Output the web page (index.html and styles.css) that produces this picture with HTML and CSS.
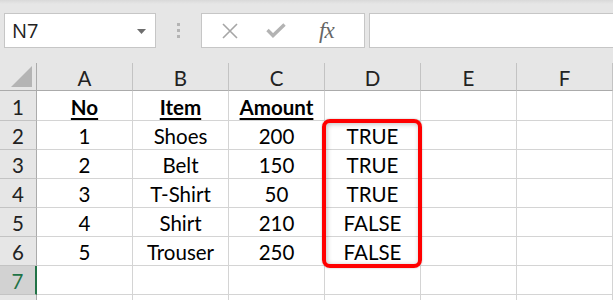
FILE: index.html
```html
<!DOCTYPE html>
<html>
<head>
<meta charset="utf-8">
<link rel="stylesheet" href="styles.css">
</head>
<body>
<div class="app">
  <div class="toolbar">
    <div class="namebox">
      <span class="name">N7</span>
      <svg class="caret" width="9" height="5" viewBox="0 0 9 5"><path d="M0 0h9L4.5 5z" fill="#6d6d6d"/></svg>
    </div>
    <div class="grip"><i></i><i></i><i></i></div>
    <div class="fbtns">
      <svg class="ico" width="18" height="16" viewBox="0 0 18 16"><path d="M2 1L16 15M16 1L2 15" stroke="#a6a6a6" stroke-width="1.6" fill="none"/></svg>
      <svg class="ico" width="20" height="15" viewBox="0 0 20 15"><path d="M1.5 7L7 12.5L18.5 1.5" stroke="#b3b3b3" stroke-width="3.4" fill="none"/></svg>
      <span class="fx">fx</span>
    </div>
    <div class="finput"></div>
  </div>
  <div class="sheet">
    <div class="corner"><svg width="22" height="22" viewBox="0 0 22 22"><path d="M0 21L21 0V21z" fill="#b4b4b4"/></svg></div>
    <div class="ch">A</div><div class="ch">B</div><div class="ch">C</div><div class="ch">D</div><div class="ch">E</div><div class="ch">F</div>

    <div class="rh r1">1</div><div class="c r1 b">No</div><div class="c r1 b">Item</div><div class="c r1 b">Amount</div><div class="c r1"></div><div class="c r1"></div><div class="c r1"></div>
    <div class="rh">2</div><div class="c">1</div><div class="c">Shoes</div><div class="c">200</div><div class="c">TRUE</div><div class="c"></div><div class="c"></div>
    <div class="rh">3</div><div class="c">2</div><div class="c">Belt</div><div class="c">150</div><div class="c">TRUE</div><div class="c"></div><div class="c"></div>
    <div class="rh">4</div><div class="c">3</div><div class="c">T-Shirt</div><div class="c">50</div><div class="c">TRUE</div><div class="c"></div><div class="c"></div>
    <div class="rh">5</div><div class="c">4</div><div class="c">Shirt</div><div class="c">210</div><div class="c">FALSE</div><div class="c"></div><div class="c"></div>
    <div class="rh">6</div><div class="c">5</div><div class="c">Trouser</div><div class="c">250</div><div class="c">FALSE</div><div class="c"></div><div class="c"></div>
    <div class="rh sel">7</div><div class="c"></div><div class="c"></div><div class="c"></div><div class="c"></div><div class="c"></div><div class="c"></div>
    <div class="rh"></div><div class="c"></div><div class="c"></div><div class="c"></div><div class="c"></div><div class="c"></div><div class="c"></div>
  </div>
  <div class="highlight"></div>
</div>
</body>
</html>
```
FILE: styles.css
```css
* { box-sizing: border-box; }
html, body { margin: 0; padding: 0; }
body {
  width: 613px;
  height: 300px;
  overflow: hidden;
  background: #ffffff;
  font-family: Lato, "Liberation Sans", sans-serif;
}
.app { position: relative; width: 613px; height: 300px; overflow: hidden; }

.toolbar {
  height: 63px;
  background: linear-gradient(#d9d9d9 0, #e6e6e6 4px, #e6e6e6 100%);
  display: flex;
  align-items: flex-start;
  padding-top: 13px;
}
.namebox {
  margin-left: 4px;
  width: 152px;
  height: 35px;
  background: #fff;
  border: 1px solid #c6c6c6;
  display: flex;
  align-items: center;
  justify-content: space-between;
  padding: 0 9px 0 7px;
}
.name { font-family: "Open Sans", sans-serif; font-size: 20px; color: #222; }
.caret { margin-top: 1px; }
.grip {
  width: 45px;
  height: 35px;
  display: flex;
  flex-direction: column;
  align-items: center;
  justify-content: center;
  gap: 3px;
}
.grip i { display: block; width: 3px; height: 3px; background: #b4b4b4; }
.fbtns {
  width: 164px;
  height: 35px;
  background: #fff;
  border: 1px solid #c6c6c6;
  display: flex;
  align-items: center;
  padding-left: 19px;
}
.fbtns .ico:nth-child(2) { margin-left: 27px; }
.fx {
  margin-left: 33px;
  font-family: "Liberation Serif", serif;
  font-style: italic;
  font-size: 23px;
  color: #666;
  letter-spacing: -1px;
}
.finput {
  margin-left: 4px;
  flex: 1;
  height: 35px;
  background: #fff;
  border: 1px solid #c6c6c6;
  border-right: none;
}

.sheet {
  display: grid;
  grid-template-columns: 37px repeat(6, 96px);
  grid-template-rows: 28px 30px repeat(7, 29px);
  font-size: 20.5px;
  color: #000;
}
.corner {
  background: #e6e6e6;
  border-right: 1px solid #ababab;
  border-bottom: 1px solid #ababab;
  display: flex;
  align-items: flex-end;
  justify-content: flex-end;
  padding: 0 3px 2px 0;
}
.ch {
  background: #e6e6e6;
  border-right: 1px solid #c3c3c3;
  border-bottom: 1px solid #ababab;
  display: flex;
  align-items: center;
  justify-content: center;
  padding-top: 3px;
  color: #222;
}
.rh {
  background: #e6e6e6;
  border-right: 1px solid #ababab;
  border-bottom: 1px solid #c3c3c3;
  display: flex;
  align-items: center;
  justify-content: center;
  padding-top: 2px;
  color: #222;
}
.rh.sel {
  background: #d2d2d2;
  color: #217346;
  border-right: 2px solid #217346;
}
.c {
  border-right: 1px solid #d4d4d4;
  border-bottom: 1px solid #d4d4d4;
  display: flex;
  align-items: center;
  justify-content: center;
  padding-top: 2px;
}
.b { font-weight: bold; text-decoration: underline; text-underline-offset: 3px; }

.highlight {
  position: absolute;
  left: 322px;
  top: 119px;
  width: 100px;
  height: 149px;
  border: 4px solid #ff0000;
  border-radius: 8px;
  box-shadow: inset 1px 1px 5px rgba(0,0,0,0.25), 0 0 2px rgba(0,0,0,0.3);
}
```
